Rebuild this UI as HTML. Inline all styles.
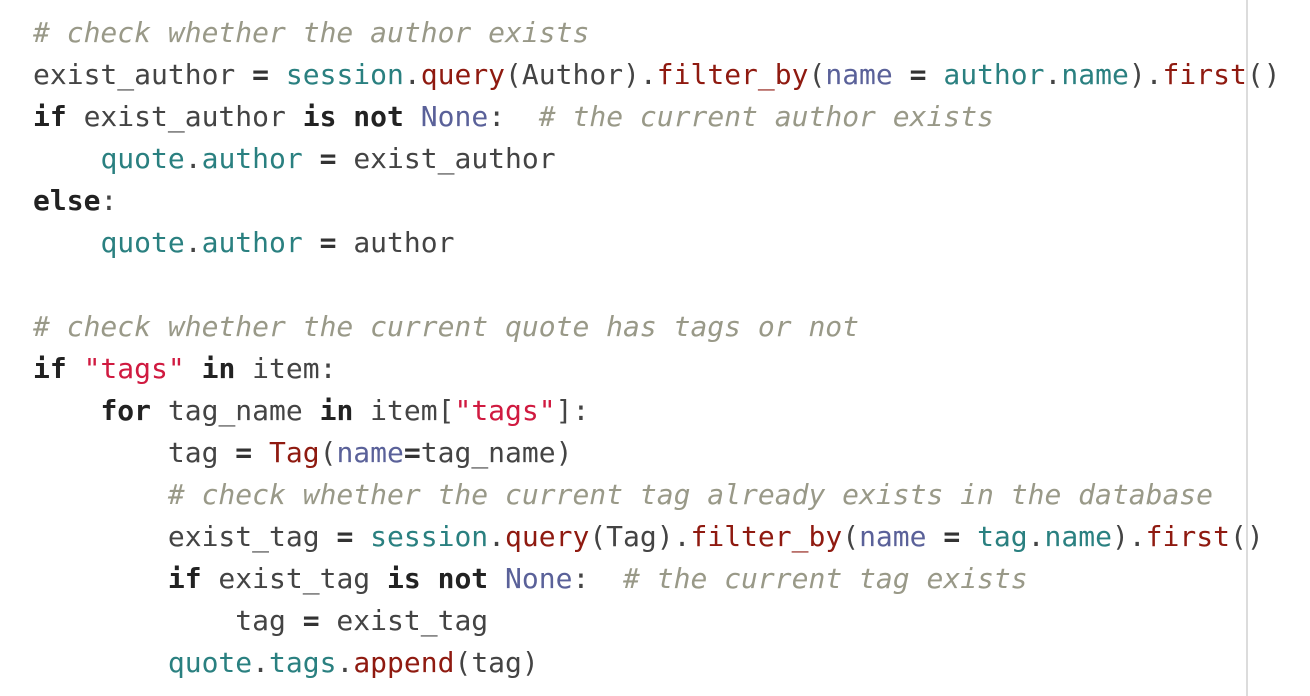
<!DOCTYPE html>
<html><head><meta charset="utf-8"><style>
html,body{margin:0;padding:0;background:#fff;width:1310px;height:696px;overflow:hidden}
.vl{position:absolute;left:1246px;top:0;width:2px;height:696px;background:#dcdcdc}
pre{position:absolute;left:33px;top:12px;margin:0;font-family:"DejaVu Sans Mono","Liberation Mono",monospace;font-size:28px;line-height:42px;color:#444}
.c{color:#998;font-style:italic}
.t{color:#2a8080}
.r{color:#8f1a10}
.n{color:#5a6199}
.k{font-weight:bold;color:#222}
.o{font-weight:bold;color:#333}
.s{color:#d01a40}
</style></head><body>
<div class="vl"></div>
<pre><span class="c"># check whether the author exists</span>
exist_author <span class="o">=</span> <span class="t">session</span>.<span class="r">query</span>(Author).<span class="r">filter_by</span>(<span class="n">name</span> <span class="o">=</span> <span class="t">author</span>.<span class="t">name</span>).<span class="r">first</span>()
<span class="k">if</span> exist_author <span class="k">is not</span> <span class="n">None</span>:  <span class="c"># the current author exists</span>
    <span class="t">quote</span>.<span class="t">author</span> <span class="o">=</span> exist_author
<span class="k">else</span>:
    <span class="t">quote</span>.<span class="t">author</span> <span class="o">=</span> author

<span class="c"># check whether the current quote has tags or not</span>
<span class="k">if</span> <span class="s">"tags"</span> <span class="k">in</span> item:
    <span class="k">for</span> tag_name <span class="k">in</span> item[<span class="s">"tags"</span>]:
        tag <span class="o">=</span> <span class="r">Tag</span>(<span class="n">name</span><span class="o">=</span>tag_name)
        <span class="c"># check whether the current tag already exists in the database</span>
        exist_tag <span class="o">=</span> <span class="t">session</span>.<span class="r">query</span>(Tag).<span class="r">filter_by</span>(<span class="n">name</span> <span class="o">=</span> <span class="t">tag</span>.<span class="t">name</span>).<span class="r">first</span>()
        <span class="k">if</span> exist_tag <span class="k">is not</span> <span class="n">None</span>:  <span class="c"># the current tag exists</span>
            tag <span class="o">=</span> exist_tag
        <span class="t">quote</span>.<span class="t">tags</span>.<span class="r">append</span>(tag)</pre>
</body></html>
